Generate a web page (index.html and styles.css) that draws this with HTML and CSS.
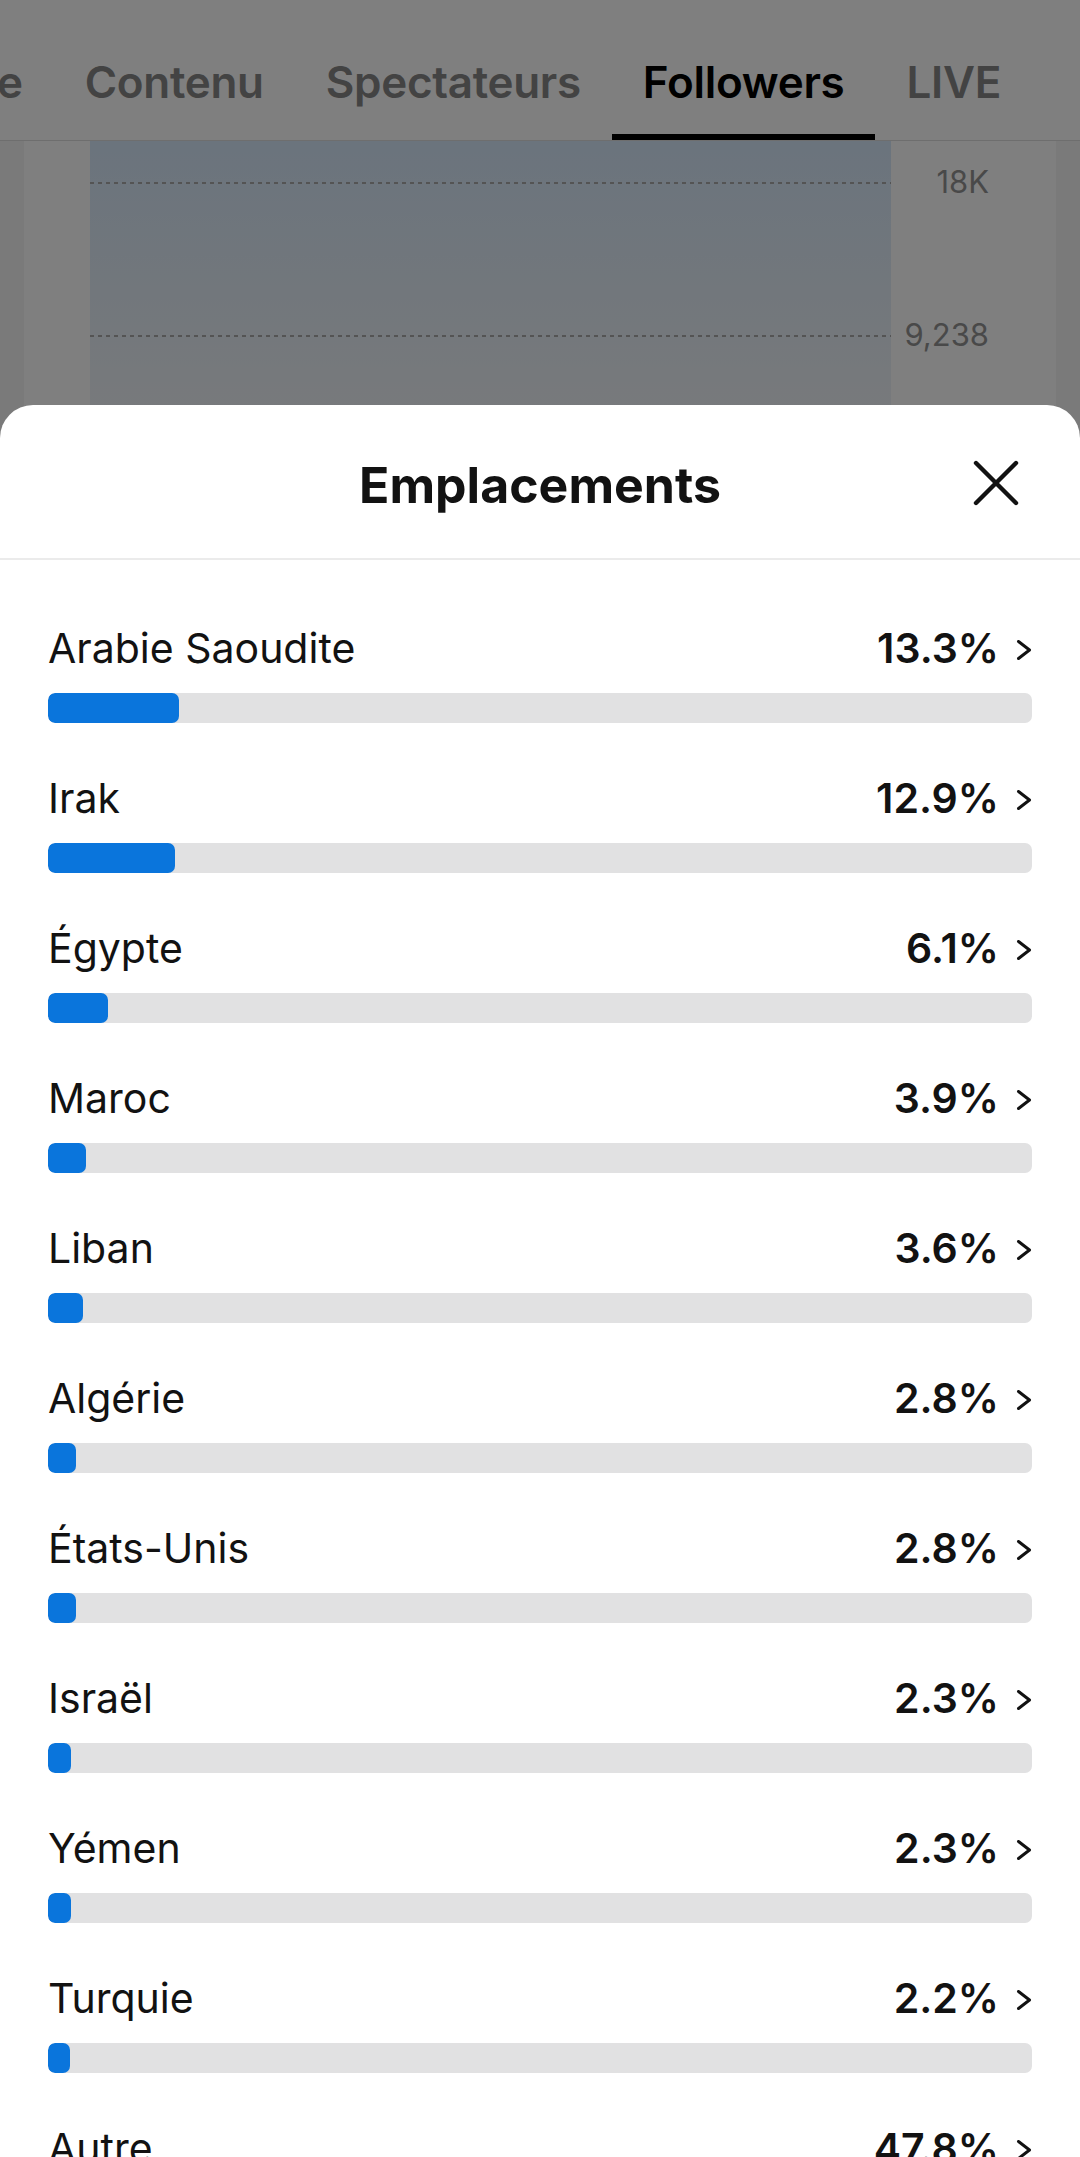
FILE: index.html
```html
<!DOCTYPE html>
<html lang="fr">
<head>
    <meta charset="UTF-8">
    <meta name="viewport" content="width=device-width, initial-scale=1.0">
    <title>Emplacements</title>
    <link rel="stylesheet" href="styles.css">
</head>
<body>
    <!-- Analytics page behind the sheet -->
    <nav class="tabs">
        <a href="#" class="tab">Vue d'ensemble</a>
        <a href="#" class="tab">Contenu</a>
        <a href="#" class="tab">Spectateurs</a>
        <a href="#" class="tab active">Followers</a>
        <a href="#" class="tab">LIVE</a>
    </nav>

    <div class="card">
        <div class="chart">
            <div class="tick">
                <div class="tick-line"></div>
                <span class="tick-label">18K</span>
            </div>
            <div class="tick">
                <div class="tick-line"></div>
                <span class="tick-label">9,238</span>
            </div>
        </div>
    </div>

    <div class="backdrop"></div>

    <!-- Locations sheet -->
    <div class="sheet">
        <div class="sheet-header">
            <span></span>
            <h2>Emplacements</h2>
            <button class="close-btn" aria-label="Fermer">
                <svg width="46" height="46" viewBox="0 0 46 46">
                    <path d="M3 3 L43 43 M43 3 L3 43" stroke="#121212" stroke-width="4.4" stroke-linecap="round" fill="none"/>
                </svg>
            </button>
        </div>

        <ul class="locations" id="locations"></ul>
    </div>

    <script>
        const locations = [
            ['Arabie Saoudite', 13.3],
            ['Irak', 12.9],
            ['Égypte', 6.1],
            ['Maroc', 3.9],
            ['Liban', 3.6],
            ['Algérie', 2.8],
            ['États-Unis', 2.8],
            ['Israël', 2.3],
            ['Yémen', 2.3],
            ['Turquie', 2.2],
            ['Autre', 47.8]
        ];

        const list = document.getElementById('locations');
        locations.forEach(([name, pct]) => {
            const li = document.createElement('li');
            li.className = 'location';
            li.innerHTML = `
                <div class="location-head">
                    <span class="location-name">${name}</span>
                    <span class="location-value">
                        <span class="pct">${pct.toFixed(1)}%</span>
                        <svg width="16" height="20" viewBox="0 0 16 20"><path d="M2.5 1.5 L13.5 10 L2.5 18.5" stroke="#121212" stroke-width="3" stroke-linecap="round" stroke-linejoin="round" fill="none"/></svg>
                    </span>
                </div>
                <div class="track"><div class="fill" style="width: ${pct}%"></div></div>`;
            list.appendChild(li);
        });
    </script>
</body>
</html>
```

FILE: styles.css
```css
body {
    margin: 0;
    font-family: 'Inter', 'Roboto', sans-serif;
    background: #f4f4f4;
    color: #121212;
    height: 2157px;
    overflow: hidden;
}

/* Tabs */
.tabs {
    display: flex;
    justify-content: flex-end;
    padding-right: 48px;
    height: 140px;
    background: #fff;
    border-bottom: 1px solid #dcdcdc;
    overflow: hidden;
}

.tab {
    flex-shrink: 0;
    padding: 56px 31px 0;
    height: 78px;
    border-bottom: 6px solid transparent;
    font-size: 44px;
    font-weight: 600;
    line-height: 53px;
    letter-spacing: -0.3px;
    color: #878787;
    text-decoration: none;
    white-space: nowrap;
}

.tab.active {
    color: #000;
    border-bottom-color: #000;
}

/* Chart card */
.card {
    margin: 0 24px;
    background: #fff;
    height: 600px;
}

.chart {
    padding: 20px 67px 0 66px;
    height: 580px;
    background: linear-gradient(to bottom, #d6e8fa, #f0f4f8 270px) 66px 0 / 801px 100% no-repeat;
}

.tick {
    display: flex;
    align-items: center;
    height: 40px;
}

.tick + .tick {
    margin-top: 113px;
}

.tick-line {
    width: 801px;
    height: 2px;
    margin-top: 4px;
    background: repeating-linear-gradient(to right, #a8a8a8 0 4px, transparent 4px 8px);
}

.tick-label {
    flex: 1;
    text-align: right;
    font-size: 31px;
    color: #939393;
}

.backdrop {
    position: fixed;
    inset: 0;
    background: rgba(0, 0, 0, 0.5);
}

/* Sheet */
.sheet {
    position: fixed;
    top: 405px;
    left: 0;
    right: 0;
    bottom: 0;
    background: #fff;
    border-radius: 33px 33px 0 0;
    overflow: hidden;
}

.sheet-header {
    display: grid;
    grid-template-columns: 1fr auto 1fr;
    align-items: center;
    height: 146px;
    padding-top: 7px;
    border-bottom: 2px solid #ebebeb;
}

.sheet-header h2 {
    margin: 0;
    font-size: 50px;
    font-weight: 700;
    line-height: 60px;
}

.close-btn {
    justify-self: end;
    margin-right: 61px;
    margin-bottom: 4px;
    padding: 0;
    border: none;
    background: none;
    display: flex;
}

.locations {
    list-style: none;
    margin: 0;
    padding: 63px 48px 0;
}

.location {
    padding-bottom: 50px;
}

.location-head {
    display: flex;
    justify-content: space-between;
    align-items: center;
    height: 50px;
    margin-bottom: 20px;
    font-size: 41px;
    line-height: 50px;
}

.location-value {
    display: flex;
    align-items: center;
    gap: 17px;
}

.location-value svg {
    margin-top: 4px;
}

.pct {
    font-weight: 600;
}

.track {
    height: 30px;
    border-radius: 7px;
    background: #e1e1e2;
    overflow: hidden;
}

.fill {
    height: 100%;
    border-radius: 7px;
    background: #0a75dc;
}
```
